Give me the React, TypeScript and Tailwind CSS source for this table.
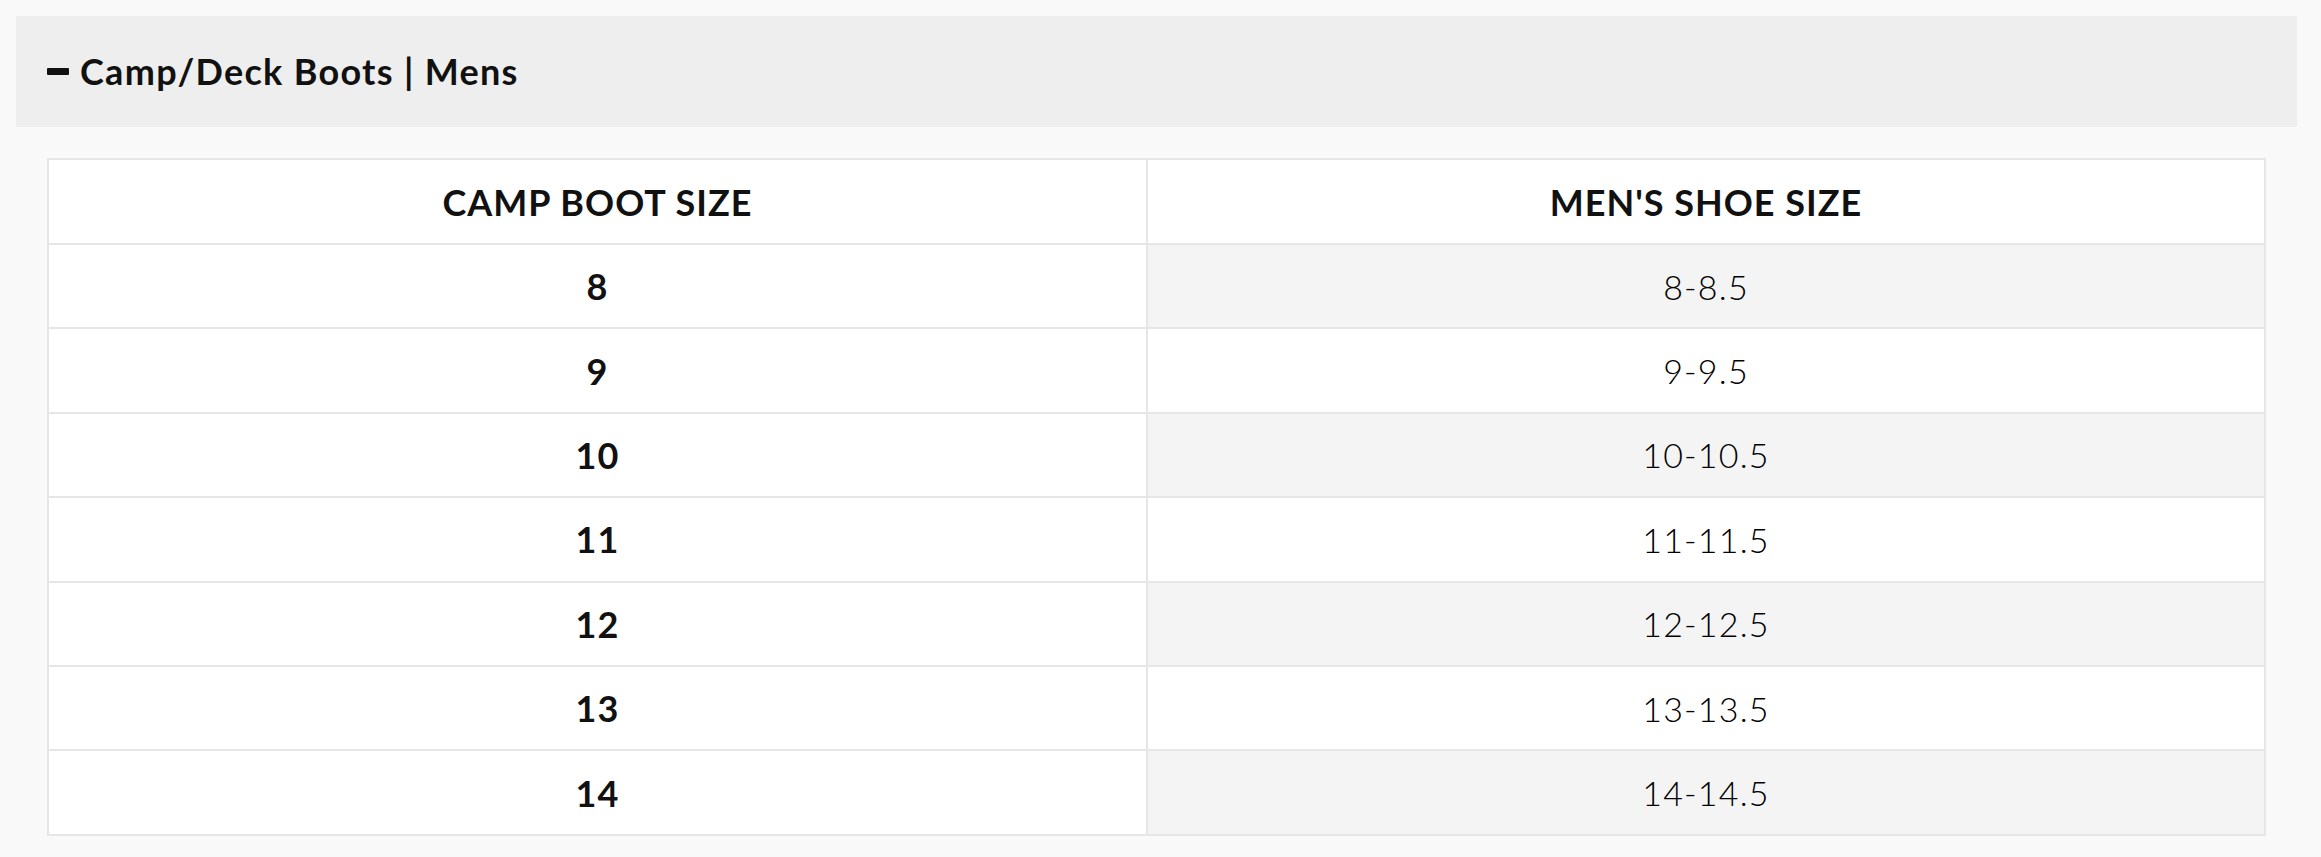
import React from "react";

const rows: [string, string][] = [
  ["8", "8-8.5"],
  ["9", "9-9.5"],
  ["10", "10-10.5"],
  ["11", "11-11.5"],
  ["12", "12-12.5"],
  ["13", "13-13.5"],
  ["14", "14-14.5"],
];

export default function App() {
  return (
    <div
      className="min-h-screen bg-[#f9f9f9] pt-4 pl-4 pr-6 pb-[22px] text-[#111]"
      style={{ fontFamily: "Lato, 'Noto Sans', sans-serif" }}
    >
      <div className="flex h-[111px] items-center bg-[#eeeeee] pl-[31px]">
        <span className="mr-[11px] block h-[7px] w-[22px] rounded-[1px] bg-[#111]" />
        <h2 className="pb-[2px] text-[36px] font-bold leading-none tracking-[1.3px]">
          Camp/Deck Boots | Mens
        </h2>
      </div>
      <div className="px-[31px] pt-[31px]">
        <table className="w-full border-collapse border-2 border-[#e6e6e6] bg-white">
          <colgroup>
            <col className="w-[1099px]" />
            <col />
          </colgroup>
          <thead>
            <tr className="h-[85px]">
              <th className="border-2 border-[#e6e6e6] text-center text-[36px] font-bold uppercase tracking-[1px]">
                Camp Boot Size
              </th>
              <th className="border-2 border-[#e6e6e6] text-center text-[36px] font-bold uppercase tracking-[1px]">
                Men's Shoe Size
              </th>
            </tr>
          </thead>
          <tbody>
            {rows.map(([a, b], i) => (
              <tr key={a} className="h-[84.4px]">
                <td className="border-2 border-[#e6e6e6] bg-white text-center text-[36px] font-bold tracking-[1px]">
                  {a}
                </td>
                <td
                  className={
                    "border-2 border-[#e6e6e6] text-center text-[34px] font-light tracking-[1.2px] text-black " +
                    (i % 2 === 0 ? "bg-[#f4f4f4]" : "bg-white")
                  }
                >
                  {b}
                </td>
              </tr>
            ))}
          </tbody>
        </table>
      </div>
    </div>
  );
}
